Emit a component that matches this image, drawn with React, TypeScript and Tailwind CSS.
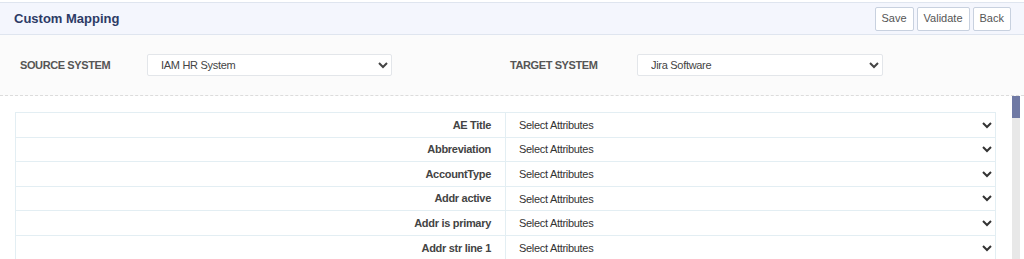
import React from "react";

const fields = ["AE Title", "Abbreviation", "AccountType", "Addr active", "Addr is primary", "Addr str line 1"];

export default function App() {
  return (
    <div className="w-[1024px] h-[259px] overflow-hidden bg-white font-['Liberation_Sans',Arial,sans-serif] text-[11px] text-[#333]">
      {/* Page header */}
      <div className="mt-[2px] h-[33px] border-t border-b border-[#dfe5ef] bg-[#f4f6fd] flex items-center justify-between pl-[14px] pr-[13px]">
        <h1 className="text-[13px] font-bold text-[#2d3b66]">Custom Mapping</h1>
        <div className="flex gap-[3px]">
          {["Save", "Validate", "Back"].map((b) => (
            <button
              key={b}
              className="h-[24px] px-[6px] border border-[#c8d1df] rounded-[2px] bg-white text-[11px] text-[#555]"
            >
              {b}
            </button>
          ))}
        </div>
      </div>

      {/* System pickers */}
      <div className="h-[61px] border-b border-dashed border-[#dcdcdc] bg-[#fbfbfb] flex items-center">
        <span className="w-[147px] pl-[20px] font-bold text-[#555] tracking-[-0.4px]">SOURCE SYSTEM</span>
        <select className="w-[245px] h-[22px] pl-[9px] border border-[#e3e6ea] rounded-[2px] bg-white text-[11px] text-[#444] tracking-[-0.3px]">
          <option>IAM HR System</option>
        </select>
        <span className="w-[127px] ml-[118px] font-bold text-[#555] tracking-[-0.4px]">TARGET SYSTEM</span>
        <select className="w-[246px] h-[22px] pl-[9px] border border-[#e3e6ea] rounded-[2px] bg-white text-[11px] text-[#444] tracking-[-0.3px]">
          <option>Jira Software</option>
        </select>
      </div>

      {/* Mapping table + scrollbar */}
      <div className="flex">
        <div className="flex-1 pl-[15px] pr-[16px] pt-[16px]">
          <div className="border-t border-l border-[#e3eef3]">
            {fields.map((f) => (
              <div key={f} className="flex h-[24.6px] border-b border-[#e3eef3]">
                <div className="w-[490px] border-r border-[#e3eef3] flex items-center justify-end pr-[14px] font-bold text-[#444] tracking-[-0.3px]">
                  {f}
                </div>
                <select className="flex-1 h-full pl-[9px] pr-[4px] border-r border-[#e3eef3] bg-white text-[11px] text-[#333] tracking-[-0.3px]">
                  <option>Select Attributes</option>
                </select>
              </div>
            ))}
          </div>
        </div>
        <div className="w-[8px] mr-[4px] h-[163px] bg-[#e8e8e8]">
          <div className="h-[22px] bg-[#6f79a4]" />
        </div>
      </div>
    </div>
  );
}
